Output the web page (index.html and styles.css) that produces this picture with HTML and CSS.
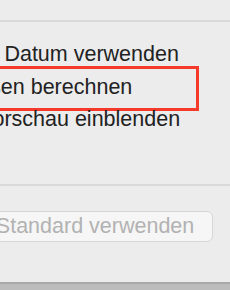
FILE: index.html
```html
<!DOCTYPE html>
<html lang="de">
<head>
<meta charset="utf-8">
<link rel="stylesheet" href="styles.css">
</head>
<body>
<div class="window">
  <div class="header"></div>
  <div class="sep"></div>
  <div class="options">
    <div class="opt">Relatives Datum verwenden</div>
    <div class="opt highlighted">Alle Größen berechnen<span class="mark"></span></div>
    <div class="opt">Symbolvorschau einblenden</div>
  </div>
  <div class="sep"></div>
  <div class="actions">
    <button class="btn" disabled>Als Standard verwenden</button>
  </div>
</div>
<div class="desk"></div>
</body>
</html>
```

FILE: styles.css
```css
html, body {
  margin: 0;
  padding: 0;
}
body {
  width: 230px;
  height: 290px;
  overflow: hidden;
  background: #bcbcbc;
  font-family: "Liberation Sans", Arial, sans-serif;
}
.window {
  height: 282px;
  background: #ececec;
  display: flex;
  flex-direction: column;
  border-bottom: 2px solid #a8a8a8;
  box-sizing: content-box;
}
.header {
  height: 20px;
}
.sep {
  height: 2px;
  background: #dadada;
  flex-shrink: 0;
}
.options {
  padding: 16.3px 0 48.2px 0;
  margin-left: -90px;
  display: flex;
  flex-direction: column;
}
.opt {
  position: relative;
  font-size: 21.5px;
  line-height: 32.5px;
  height: 32.5px;
  color: #222222;
  white-space: nowrap;
}
.mark {
  position: absolute;
  left: 40px;
  top: -4.8px;
  width: 249px;
  height: 45px;
  box-sizing: border-box;
  border: 3px solid #f5392b;
}
.actions {
  padding-top: 25px;
  margin-left: -57px;
  display: flex;
}
.btn {
  height: 31px;
  box-sizing: border-box;
  padding: 0 18px 0 16px;
  font-family: "Liberation Sans", Arial, sans-serif;
  font-size: 21.5px;
  line-height: 29px;
  color: #b2b2b2;
  background: #f6f6f6;
  border: 1px solid #d6d6d6;
  border-radius: 6px;
  white-space: nowrap;
}
.desk {
  height: 8px;
}
```
